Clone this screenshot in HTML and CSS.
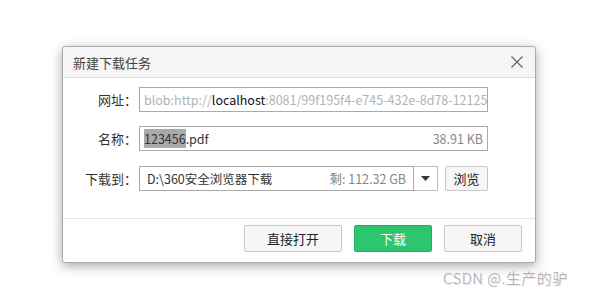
FILE: index.html
```html
<!DOCTYPE html>
<html lang="zh-CN">
<head>
    <meta charset="UTF-8">
    <title>新建下载任务</title>
    <link rel="stylesheet" href="styles.css">
</head>
<body>
    <div class="dialog">
        <div class="dialog-header">
            <span class="dialog-title">新建下载任务</span>
            <svg class="close" width="12" height="12" viewBox="0 0 12 12">
                <path d="M0.5 0.5L11.5 11.5M11.5 0.5L0.5 11.5" stroke="#666" stroke-width="1.2" fill="none"/>
            </svg>
        </div>
        <div class="dialog-body">
            <div class="row">
                <label class="label">网址：</label>
                <div class="field url">blob:http://<span class="host">localhost</span>:8081/99f195f4-e745-432e-8d78-12125</div>
            </div>
            <div class="row">
                <label class="label">名称：</label>
                <div class="field name">
                    <span><span class="sel">123456</span>.pdf</span>
                    <span class="meta">38.91 KB</span>
                </div>
            </div>
            <div class="row">
                <label class="label">下载到：</label>
                <div class="field path">
                    <span>D:\360安全浏览器下载</span>
                    <span class="meta">剩: 112.32 GB</span>
                </div>
                <div class="dropdown">
                    <svg width="9" height="5" viewBox="0 0 9 5"><path d="M0 0H9L4.5 5Z" fill="#333"/></svg>
                </div>
                <button class="btn small">浏览</button>
            </div>
        </div>
        <div class="dialog-footer">
            <button class="btn wide">直接打开</button>
            <button class="btn primary">下载</button>
            <button class="btn">取消</button>
        </div>
    </div>
    <div class="watermark">CSDN @.生产的驴</div>
</body>
</html>
```

FILE: styles.css
```css
body {
    margin: 0;
    width: 610px;
    height: 298px;
    background-color: #fff;
    font-family: "Noto Sans CJK SC", "Liberation Sans", sans-serif;
    font-size: 13px;
    color: #333;
    position: relative;
    overflow: hidden;
}
.dialog {
    margin: 46px 0 0 62px;
    width: 472px;
    height: 215px;
    border: 1px solid #a9a9a9;
    border-radius: 3px;
    background-color: #fff;
    box-shadow: 0 3px 12px rgba(0, 0, 0, 0.35);
    display: flex;
    flex-direction: column;
}
.dialog-header {
    height: 30px;
    flex-shrink: 0;
    background-color: #f5f5f5;
    border-bottom: 1px solid #dcdcdc;
    border-radius: 3px 3px 0 0;
    display: flex;
    align-items: center;
    justify-content: space-between;
    padding: 0 12px 0 10px;
}
.dialog-title {
    color: #444;
    font-size: 13px;
}
.dialog-body {
    height: 141px;
    flex-shrink: 0;
    padding-top: 9px;
    border-bottom: 1px solid #e6e6e6;
    box-sizing: border-box;
}
.row {
    display: flex;
    align-items: center;
    height: 25px;
    margin-bottom: 14px;
}
.row:last-child {
    margin-bottom: 0;
}
.row:nth-child(2) {
    margin-bottom: 15px;
}
.label {
    width: 74px;
    text-align: right;
    margin-right: 2px;
    color: #333;
}
.field {
    box-sizing: border-box;
    height: 25px;
    border: 1px solid #a9a9a9;
    display: flex;
    align-items: center;
    justify-content: space-between;
    padding: 0 4px;
    white-space: nowrap;
    overflow: hidden;
    font-size: 12.5px;
}
.url,
.name {
    width: 349px;
}
.url {
    color: #b3b3b3;
    justify-content: flex-start;
}
.host {
    color: #111;
}
.name {
    color: #333;
}
.sel {
    background-color: #aaa;
}
.meta {
    color: #888;
}
.path {
    width: 275px;
    padding: 0 7px;
    color: #333;
}
.dropdown {
    box-sizing: border-box;
    width: 24px;
    height: 25px;
    border: 1px solid #bdbdbd;
    border-left: none;
    display: flex;
    align-items: center;
    justify-content: center;
}
.btn {
    box-sizing: border-box;
    width: 78px;
    height: 27px;
    border: 1px solid #c8c8c8;
    border-radius: 2px;
    background-color: #f6f6f6;
    font-family: inherit;
    font-size: 13px;
    color: #222;
    padding: 0;
    cursor: pointer;
}
.btn.small {
    width: 43px;
    height: 25px;
    margin-left: 7px;
}
.btn.wide {
    width: 98px;
}
.btn.primary {
    background-color: #2ec56f;
    border-color: #25ad5f;
    color: #fff;
}
.dialog-footer {
    flex: 1;
    display: flex;
    justify-content: flex-end;
    align-items: flex-start;
    gap: 12px;
    padding: 6px 13px 0 0;
}
.watermark {
    position: absolute;
    left: 443px;
    top: 267px;
    font-size: 15px;
    font-weight: 300;
    color: #a8a8a8;
    text-shadow: 1px 1px 1px rgba(0, 0, 0, 0.12);
    letter-spacing: 0.5px;
}
```
